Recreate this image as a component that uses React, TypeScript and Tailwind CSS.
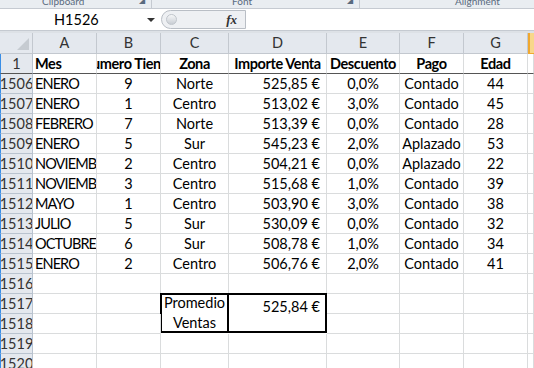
import React from 'react'

const rows = [
  ['1506', 'ENERO', '9', 'Norte', '525,85 €', '0,0%', 'Contado', '44'],
  ['1507', 'ENERO', '1', 'Centro', '513,02 €', '3,0%', 'Contado', '45'],
  ['1508', 'FEBRERO', '7', 'Norte', '513,39 €', '0,0%', 'Contado', '28'],
  ['1509', 'ENERO', '5', 'Sur', '545,23 €', '2,0%', 'Aplazado', '53'],
  ['1510', 'NOVIEMBRE', '2', 'Centro', '504,21 €', '0,0%', 'Aplazado', '22'],
  ['1511', 'NOVIEMBRE', '3', 'Centro', '515,68 €', '1,0%', 'Contado', '39'],
  ['1512', 'MAYO', '1', 'Centro', '503,90 €', '3,0%', 'Contado', '38'],
  ['1513', 'JULIO', '5', 'Sur', '530,09 €', '0,0%', 'Contado', '32'],
  ['1514', 'OCTUBRE', '6', 'Sur', '508,78 €', '1,0%', 'Contado', '34'],
  ['1515', 'ENERO', '2', 'Centro', '506,76 €', '2,0%', 'Contado', '41'],
]

const cols = 'grid grid-cols-[33px_64px_64px_68px_98px_73px_64px_64px_1fr]'
const cell = 'h-[20px] border-r border-b border-[#dadcdd] flex items-center overflow-hidden whitespace-nowrap'
const rowHead = 'h-[20px] border-r border-b border-[#b9c3cf] bg-[#e4e8ee] flex items-center justify-center text-[#333] border-l border-l-[#3a8ee6] overflow-hidden'

const Cell = ({ children, align = 'center' }: { children?: React.ReactNode; align?: 'left' | 'center' | 'right' }) => (
  <div
    className={
      cell +
      (align === 'left'
        ? ' justify-start pl-[2px] tracking-[-0.9px]'
        : align === 'right'
        ? ' justify-end pr-[6px]'
        : ' justify-center')
    }
  >
    {children}
  </div>
)

export default function App() {
  return (
    <div className="w-[534px] h-[368px] overflow-hidden bg-white text-[14.5px] text-black" style={{ fontFamily: 'Lato, "Liberation Sans", sans-serif' }}>
      {/* ribbon group labels */}
      <div className="h-[9px] bg-[#e9edf1] border-b border-[#c5cad1] overflow-hidden flex text-[10px] text-[#5a6b7e] leading-none">
        <div className="w-[152px] border-r border-[#c5cad1] flex justify-between pl-[42px] pr-[6px] mt-[-4px]">
          <span>Clipboard</span>
          <span className="text-[8px]">◢</span>
        </div>
        <div className="w-[208px] border-r border-[#c5cad1] flex justify-between pl-[80px] pr-[6px] mt-[-4px]">
          <span>Font</span>
          <span className="text-[8px]">◢</span>
        </div>
        <div className="flex-1 pl-[95px] mt-[-4px]">
          <span>Alignment</span>
        </div>
      </div>

      {/* formula bar */}
      <div className="h-[22px] flex border-b border-[#c5cad1] bg-white">
        <div className="w-[161px] flex items-center">
          <span className="ml-[54px]">H1526</span>
          <span className="ml-auto mr-[6px] w-0 h-0 border-l-[4px] border-r-[4px] border-t-[4px] border-l-transparent border-r-transparent border-t-[#333]" />
        </div>
        <div className="w-[85px] my-[1px] flex items-center rounded-l-[10px] border border-[#b9bec5] bg-[#eef0f3]">
          <div className="ml-[4px] w-[11px] h-[11px] rounded-full bg-gradient-to-b from-[#f6f7f8] to-[#c9ced4] border border-[#c0c5cb]" />
          <span className="ml-auto mr-[8px] italic font-bold text-[13px] text-[#333]" style={{ fontFamily: '"Liberation Serif", serif' }}>
            fx
          </span>
        </div>
        <div className="flex-1" />
      </div>
      <div className="h-[2px] bg-[#dde1e6]" />

      <div className={cols}>
        {/* column headers */}
        <div className="h-[21px] bg-[#e4e8ee] border-r border-b border-[#c3c8cf] flex items-end justify-end pr-[3px] pb-[3px]">
          <svg width="12" height="12">
            <polygon points="12,0 12,12 0,12" fill="#c6cbd1" />
          </svg>
        </div>
        {['A', 'B', 'C', 'D', 'E', 'F', 'G'].map((c) => (
          <div key={c} className="h-[21px] bg-[#e4e8ee] border-r border-b border-[#c3c8cf] flex items-center justify-center text-[#333]">
            {c}
          </div>
        ))}
        <div className="h-[21px] bg-[#f8d78a] border-l-2 border-[#f0a830] border-b" />

        {/* row 1 */}
        <div className={rowHead + ' !border-b-[#555]'}>1</div>
        {[
          ['Mes', 'left'],
          ['Numero Tienda', 'center'],
          ['Zona', 'center'],
          ['Importe Venta', 'center'],
          ['Descuento', 'center'],
          ['Pago', 'center'],
          ['Edad', 'center'],
        ].map(([t, a]) => (
          <div
            key={t}
            className={
              cell +
              ' font-bold tracking-[-0.4px] !border-b-[#555] ' +
              (a === 'left' ? 'justify-start pl-[2px]' : 'justify-center')
            }
          >
            {t}
          </div>
        ))}
        <div className={cell + ' !border-b-[#555]'} />

        {rows.map((r) => (
          <React.Fragment key={r[0]}>
            <div className={rowHead}>{r[0]}</div>
            <Cell align="left">{r[1]}</Cell>
            <Cell>{r[2]}</Cell>
            <Cell>{r[3]}</Cell>
            <Cell align="right">{r[4]}</Cell>
            <Cell>{r[5]}</Cell>
            <Cell>{r[6]}</Cell>
            <Cell>{r[7]}</Cell>
            <Cell />
          </React.Fragment>
        ))}

        <div className={rowHead}>1516</div>
        <Cell /><Cell /><Cell /><Cell /><Cell /><Cell /><Cell /><Cell />

        {/* 1517-1518 with the boxed average */}
        <div className={rowHead}>1517</div>
        <Cell /><Cell />
        <div className="row-span-2 h-[40px] border-2 border-black -mt-[1px] -ml-[1px] flex flex-col items-center justify-center leading-[20px]">
          <span>Promedio</span>
          <span>Ventas</span>
        </div>
        <div className="row-span-2 h-[40px] border-y-2 border-r-2 border-black -mt-[1px] flex justify-end pr-[5px] pt-[1px]">
          525,84 €
        </div>
        <Cell /><Cell /><Cell /><Cell />
        <div className={rowHead}>1518</div>
        <Cell /><Cell />
        <Cell /><Cell /><Cell /><Cell />

        {['1519', '1520'].map((n) => (
          <React.Fragment key={n}>
            <div className={rowHead}>{n}</div>
            <Cell /><Cell /><Cell /><Cell /><Cell /><Cell /><Cell /><Cell />
          </React.Fragment>
        ))}
      </div>
    </div>
  )
}
